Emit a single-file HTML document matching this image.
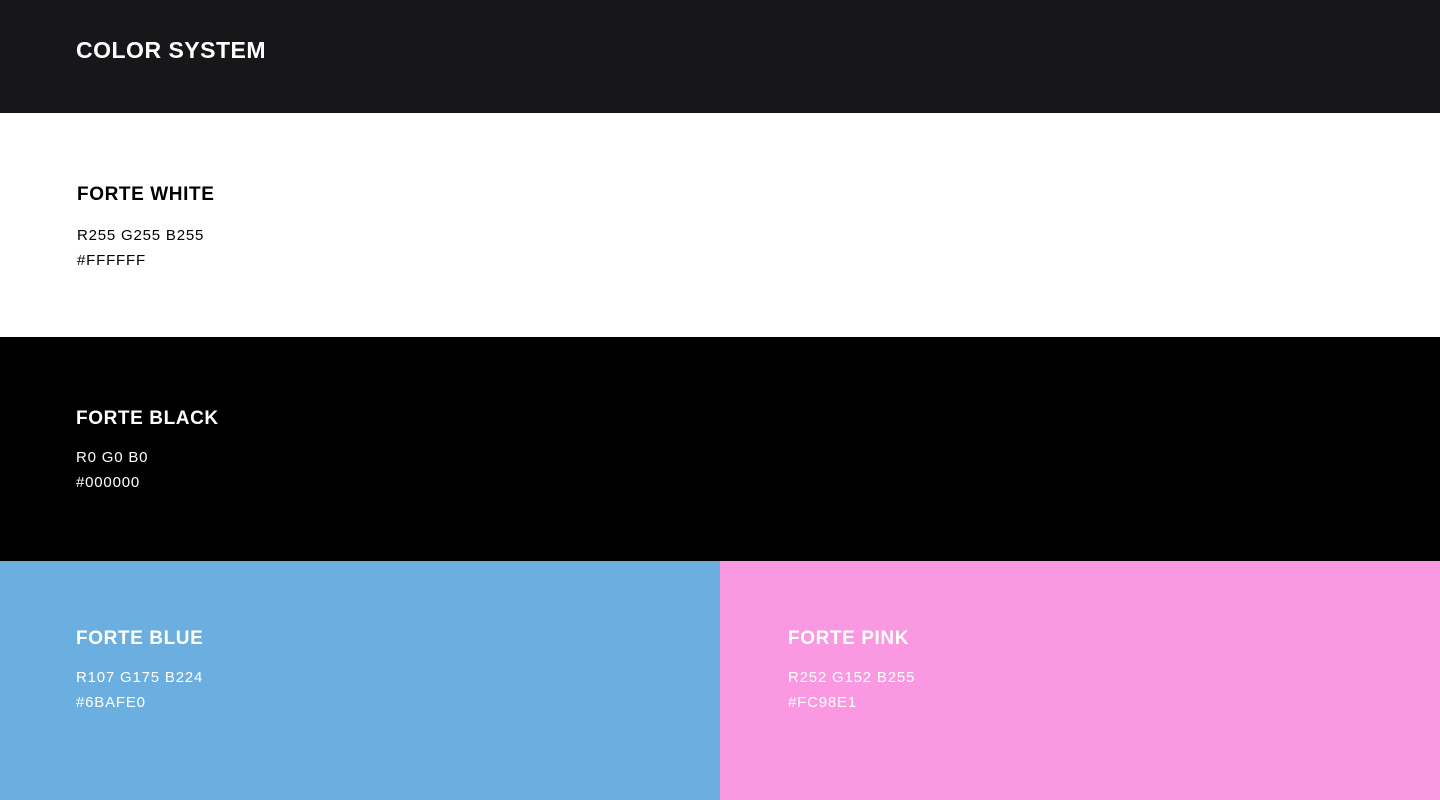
<!DOCTYPE html>
<html><head><style>
body{margin:0;width:1440px;height:800px;overflow:hidden;font-family:"Liberation Sans",sans-serif;}
.s{position:absolute;left:0;width:1440px;}
h1,h2{margin:0;font-weight:bold;position:absolute;}
h1{font-size:23px;letter-spacing:0.5px;}
h2{font-size:19px;letter-spacing:0.6px;}
p{margin:0;position:absolute;font-size:15px;line-height:25px;letter-spacing:0.8px;}
</style></head><body>
<div class="s" style="top:0;height:113px;background:#17171a;color:#fff">
<h1 style="left:76px;top:37px">COLOR SYSTEM</h1></div>
<div class="s" style="top:113px;height:224px;background:#fff;color:#000">
<h2 style="left:77px;top:71px">FORTE WHITE</h2>
<p style="left:77px;top:110px">R255 G255 B255<br>#FFFFFF</p></div>
<div class="s" style="top:337px;height:224px;background:#000;color:#fff">
<h2 style="left:76px;top:71px">FORTE BLACK</h2>
<p style="left:76px;top:108px">R0 G0 B0<br>#000000</p></div>
<div class="s" style="top:561px;height:239px;width:720px;background:#6bafe0;color:#fff">
<h2 style="left:76px;top:67px">FORTE BLUE</h2>
<p style="left:76px;top:104px">R107 G175 B224<br>#6BAFE0</p></div>
<div class="s" style="top:561px;left:720px;height:239px;width:720px;background:#fa98e1;color:#fff">
<h2 style="left:68px;top:67px">FORTE PINK</h2>
<p style="left:68px;top:104px">R252 G152 B255<br>#FC98E1</p></div>
</body></html>
